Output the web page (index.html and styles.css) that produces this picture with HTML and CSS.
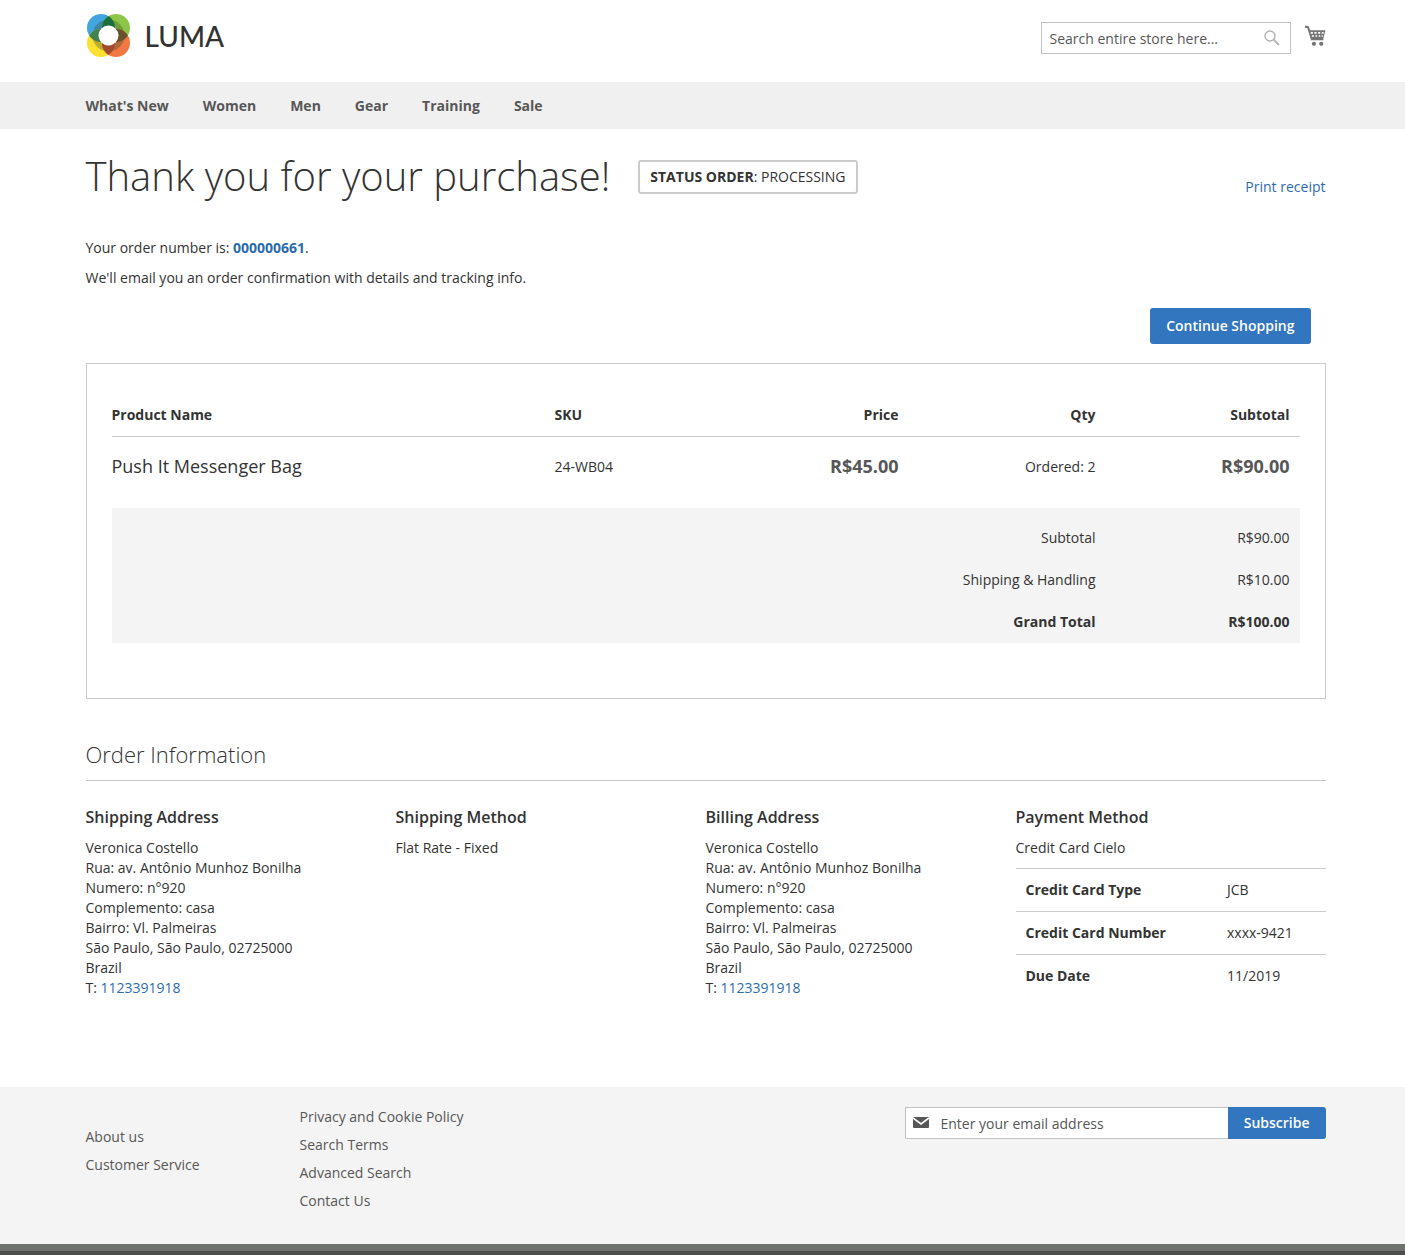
FILE: index.html
```html
<!DOCTYPE html>
<html lang="en">
<head>
<meta charset="utf-8">
<meta name="viewport" content="width=device-width, initial-scale=1">
<title>Thank you for your purchase!</title>
<link rel="stylesheet" href="styles.css">
</head>
<body>
<header class="container header">
  <a class="logo" href="#" aria-label="Luma">
    <svg class="logo-mark" viewBox="-1 -1 45 45" aria-hidden="true">
      <defs>
        <clipPath id="tl"><circle cx="14" cy="14" r="14"/></clipPath>
        <clipPath id="tr"><circle cx="29" cy="14" r="14"/></clipPath>
        <clipPath id="bl"><circle cx="14" cy="29" r="14"/></clipPath>
      </defs>
      <circle cx="14" cy="14" r="14" fill="#41a6e0"/>
      <circle cx="29" cy="14" r="14" fill="#8dc647"/>
      <circle cx="14" cy="29" r="14" fill="#fde032"/>
      <circle cx="29" cy="29" r="14" fill="#f27843"/>
      <circle cx="21.500" cy="21.500" r="16" fill="#3b4a2c" fill-opacity=".35"/>
      <circle cx="29" cy="14" r="14" fill="#1c6e3c" clip-path="url(#tl)"/>
      <circle cx="14" cy="29" r="14" fill="#42824f" clip-path="url(#tl)"/>
      <circle cx="29" cy="29" r="14" fill="#69522b" clip-path="url(#tr)"/>
      <circle cx="29" cy="29" r="14" fill="#a44a2c" clip-path="url(#bl)"/>
      <circle cx="21.500" cy="21.500" r="10" fill="#fff"/>
    </svg>
    <span class="logo-text">LUMA</span>
  </a>
  <div class="header-tools">
    <form class="search">
      <input class="search-input" type="text" aria-label="Search" placeholder="Search entire store here...">
      <button class="search-button" type="button" aria-label="Search">
        <svg width="16" height="16" viewBox="0 0 16 16" fill="none" stroke="#b5b5b5" stroke-width="1.500"><circle cx="6" cy="6" r="5"/><path d="M9.500 9.500l5.500 5.500" stroke-width="2"/></svg>
      </button>
    </form>
    <a class="cart" href="#" aria-label="My Cart">
      <svg width="21" height="22" viewBox="0 0 20 21"><path d="M0 1.500L3 2.200l3.500 11.300h11" fill="none" stroke="#757575" stroke-width="2"/><path d="M4 5H19.500L17.500 13H6.500z" fill="#757575"/><path d="M5.500 7.500h2M9 7.500h2M12.500 7.500h2M16 7.500h1.800M6.500 10.500h2M10 10.500h1.500M13 10.500h1.500M15.800 10.500h1.200" stroke="#fff" stroke-width="1.500"/><circle cx="8.500" cy="18" r="2" fill="#757575"/><circle cx="15.500" cy="18" r="2" fill="#757575"/></svg>
    </a>
  </div>
</header>
<nav class="nav">
  <div class="container nav-list">
    <a href="#">What's New</a><a href="#">Women</a><a href="#">Men</a><a href="#">Gear</a><a href="#">Training</a><a href="#">Sale</a>
  </div>
</nav>
<main class="container main">
  <div class="title-row">
    <h1>Thank you for your purchase!</h1>
    <span class="status"><strong>STATUS ORDER</strong>: PROCESSING</span>
    <a class="print" href="#">Print receipt</a>
  </div>
  <div class="intro">
    <p>Your order number is: <a href="#"><strong>000000661</strong></a>.</p>
    <p>We'll email you an order confirmation with details and tracking info.</p>
  </div>
  <div class="actions"><button class="button continue" type="button">Continue Shopping</button></div>
  <section class="order-box">
    <table class="items">
      <colgroup><col><col class="col-sku"><col class="col-price"><col class="col-qty"><col class="col-subtotal"></colgroup>
      <thead>
        <tr><th scope="col">Product Name</th><th scope="col">SKU</th><th scope="col" class="num">Price</th><th scope="col" class="num">Qty</th><th scope="col" class="num">Subtotal</th></tr>
      </thead>
      <tbody>
        <tr><td class="product">Push It Messenger Bag</td><td>24-WB04</td><td class="num price">R$45.00</td><td class="num">Ordered: 2</td><td class="num price">R$90.00</td></tr>
      </tbody>
      <tfoot>
        <tr><th scope="row" colspan="4">Subtotal</th><td>R$90.00</td></tr>
        <tr><th scope="row" colspan="4">Shipping &amp; Handling</th><td>R$10.00</td></tr>
        <tr class="grand"><th scope="row" colspan="4">Grand Total</th><td>R$100.00</td></tr>
      </tfoot>
    </table>
  </section>
  <section>
    <h2>Order Information</h2>
    <div class="info">
      <div>
        <h3>Shipping Address</h3>
        <address>Veronica Costello<br>Rua: av. Antônio Munhoz Bonilha<br>Numero: n°920<br>Complemento: casa<br>Bairro: Vl. Palmeiras<br>São Paulo, São Paulo, 02725000<br>Brazil<br>T: <a href="#">1123391918</a></address>
      </div>
      <div>
        <h3>Shipping Method</h3>
        <p>Flat Rate - Fixed</p>
      </div>
      <div>
        <h3>Billing Address</h3>
        <address>Veronica Costello<br>Rua: av. Antônio Munhoz Bonilha<br>Numero: n°920<br>Complemento: casa<br>Bairro: Vl. Palmeiras<br>São Paulo, São Paulo, 02725000<br>Brazil<br>T: <a href="#">1123391918</a></address>
      </div>
      <div>
        <h3>Payment Method</h3>
        <p>Credit Card Cielo</p>
        <table class="payment">
          <tr><th scope="row">Credit Card Type</th><td>JCB</td></tr>
          <tr><th scope="row">Credit Card Number</th><td>xxxx-9421</td></tr>
          <tr><th scope="row">Due Date</th><td>11/2019</td></tr>
        </table>
      </div>
    </div>
  </section>
</main>
<footer class="footer">
  <div class="container footer-content">
    <ul class="links links-first"><li><a href="#">About us</a></li><li><a href="#">Customer Service</a></li></ul>
    <ul class="links"><li><a href="#">Privacy and Cookie Policy</a></li><li><a href="#">Search Terms</a></li><li><a href="#">Advanced Search</a></li><li><a href="#">Contact Us</a></li></ul>
    <form class="newsletter">
      <label class="field">
        <svg width="16" height="12" viewBox="0 0 16 12" aria-hidden="true"><rect width="16" height="11" rx="1" fill="#575757"/><path d="M0 1l8 6 8-6" fill="none" stroke="#fff" stroke-width="1.600"/></svg>
        <input type="email" aria-label="Email address" placeholder="Enter your email address">
      </label>
      <button class="button subscribe" type="button">Subscribe</button>
    </form>
  </div>
</footer>
<div class="bottom-bar"></div>
</body>
</html>
```
FILE: styles.css
```css
* { box-sizing: border-box; }
body { margin: 0; background: #fff; color: #333; font: 14px/20px "Open Sans", sans-serif; }
a { color: #2b6cb0; text-decoration: none; }
p, h1, h2, h3, ul { margin: 0; }
address { font-style: normal; }
input, button { font: inherit; }
.container { max-width: 1280px; margin: 0 auto; padding: 0 17px 0 23px; }

.header { display: flex; justify-content: space-between; align-items: flex-start; height: 82px; }
.logo { display: flex; align-items: center; gap: 14px; margin-top: 13px; color: #333; }
.logo-mark { width: 45px; height: 45px; }
.logo-text { font: 500 28px/44px Lato, sans-serif; }
.header-tools { display: flex; align-items: flex-start; gap: 14px; margin-top: 22px; }
.search { display: flex; width: 250px; height: 32px; border: 1px solid #c2c2c2; background: #fff; }
.search-input { flex: 1; min-width: 0; padding: 2px 0 0 8px; border: 0; background: none; outline: 0; }
.search-button { display: flex; align-items: center; padding: 0 10px; border: 0; background: none; }
::placeholder { color: #575757; opacity: 1; }
.cart { display: flex; padding-top: 3px; }

.nav { background: #f0f0f0; }
.nav-list { display: flex; gap: 34px; line-height: 47px; }
.nav-list a { color: #575757; font-weight: 700; }

.title-row { display: flex; align-items: center; padding-top: 20px; }
h1 { padding-bottom: 2px; font-size: 40px; line-height: 54px; font-weight: 300; }
.status { margin-left: 28px; padding: 5px 10px; border: 2px solid #ccc; border-radius: 3px; }
.print { margin: 20px 0 0 auto; }
.intro { display: grid; gap: 10px; padding-top: 33px; }
.actions { display: flex; justify-content: flex-end; padding: 20px 15px 19px 0; }
.button { border: 0; background: #3276c0; color: #fff; font-weight: 600; cursor: pointer; }
.continue { height: 36px; padding: 0 16px; border-radius: 3px; }

.order-box { padding: 30px 25px 55px; border: 1px solid #ccc; }
.items { width: 100%; border-collapse: collapse; table-layout: fixed; }
.col-sku, .col-price { width: 182px; }
.col-qty { width: 197px; }
.col-subtotal { width: 194px; }
.items th, .items td { padding: 11px 10px; text-align: left; vertical-align: top; }
.items thead th { border-bottom: 1px solid #ccc; }
.items tbody td { padding: 20px 10px 31px; }
.items th:first-child, .items td:first-child { padding-left: 0; }
.items .num, .items tfoot th, .items tfoot td { text-align: right; }
.product { font-size: 18px; line-height: 18px; }
.price { color: #575757; font-size: 18px; line-height: 18px; font-weight: 700; }
.items tfoot { background: #f4f4f4; }
.items tfoot th { font-weight: 400; }
.items tfoot tr:first-child > * { padding-top: 20px; }
.items tfoot .grand > * { font-weight: 700; }

h2 { margin: 40px 0 25px; padding-bottom: 10px; border-bottom: 1px solid #c6c6c6; font-size: 22px; line-height: 31px; font-weight: 300; }
.info { display: grid; grid-template-columns: repeat(4, 1fr); }
h3 { margin-bottom: 10px; font-size: 16px; line-height: 22px; font-weight: 600; }
.payment { width: 100%; margin-top: 10px; border-collapse: collapse; table-layout: fixed; }
.payment th, .payment td { padding: 11px 10px; border-top: 1px solid #ccc; text-align: left; }
.payment th { width: 65%; }

.footer { margin-top: 89px; background: #f4f4f4; }
.footer-content { display: flex; align-items: flex-start; padding-top: 20px; padding-bottom: 25px; }
.links { padding: 0; list-style: none; }
.links li { margin-bottom: 8px; }
.links a { color: #575757; }
.links-first { width: 214px; padding-top: 20px; }
.newsletter { display: flex; width: 421px; height: 32px; margin-left: auto; }
.field { display: flex; flex: 1; align-items: center; gap: 12px; padding-left: 7px; border: 1px solid #c2c2c2; border-right: 0; background: #fff; }
.field input { flex: 1; min-width: 0; padding: 2px 0 0; border: 0; background: none; outline: 0; }
.subscribe { padding: 0 16px; border-radius: 0 3px 3px 0; }
.bottom-bar { height: 11px; border-top: 7px solid #6e716e; background: #4c4e4b; }
```
